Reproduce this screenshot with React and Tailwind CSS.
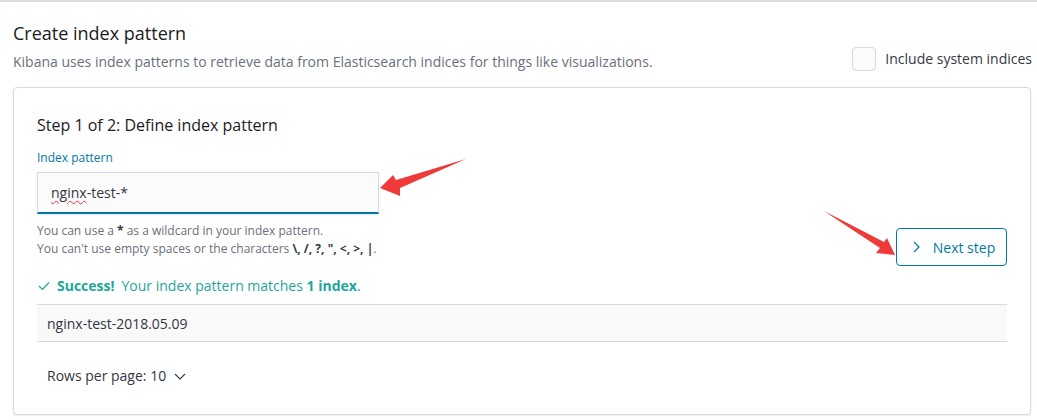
import React from 'react';

const font = { fontFamily: '"Open Sans", "Noto Sans", sans-serif' };

function Arrows() {
  // red annotation arrows drawn over the screenshot
  return (
    <svg className="absolute left-0 top-0 pointer-events-none" width="1037" height="420">
      <polygon
        fill="#f03a3a"
        points="380,186 393,173 396,178 466,157 400,186 400,194"
      />
      <polygon
        fill="#f03a3a"
        points="895,253 887,236 884,240 824,209 880,246 876,251"
      />
    </svg>
  );
}

export default function App() {
  return (
    <div className="relative w-[1037px] h-[420px] overflow-hidden bg-white border-t-2 border-[#dcdcdc]" style={font}>
      <div className="pl-[13px] pr-[5px] pt-[19px]">
        <h1 className="text-[18px] leading-6 text-[#1a1c21]">Create index pattern</h1>
        <div className="flex items-center justify-between mt-[7px]">
          <p className="text-[14px] leading-5 text-[#69707d]">
            Kibana uses index patterns to retrieve data from Elasticsearch indices for things like visualizations.
          </p>
          <label className="flex items-center gap-[9px] -mt-[7px]">
            <span className="w-[24px] h-[24px] rounded-[4px] border border-[#d9d9d9] bg-[#fbfbfb]" />
            <span className="text-[14px] text-[#343741]">Include system indices</span>
          </label>
        </div>
      </div>

      <div className="ml-[13px] mr-[6px] mt-[15px] border border-[#d9d9d9] rounded-[4px] bg-white shadow-[0_1px_2px_rgba(0,0,0,0.08)] px-[23px] pt-[25px] pb-[28px]">
        <div className="flex items-start justify-between">
          <div>
            <h2 className="text-[16px] leading-6 text-[#1a1c21]">Step 1 of 2: Define index pattern</h2>
            <div className="mt-[13px] text-[12px] leading-4 text-[#0079a5]">Index pattern</div>
            <div className="mt-[6px] w-[342px] h-[42px] bg-[#fbfbfb] border border-[#d3dae6] border-b-2 border-b-[#0079a5] shadow-[0_1px_2px_rgba(0,0,0,0.1)] flex items-center pl-[13px]">
              <span className="text-[14px] text-[#343741]">
                <span className="underline decoration-wavy decoration-[#e33] decoration-1 underline-offset-2">nginx</span>-test-*
              </span>
            </div>
            <div className="mt-[8px] text-[12px] leading-[18px] text-[#69707d]">
              <p>You can use a <b className="font-bold text-[#343741]">*</b> as a wildcard in your index pattern.</p>
              <p>
                You can't use empty spaces or the characters <b className="font-bold text-[#343741]">\, /, ?, ", &lt;, &gt;, |</b>.
              </p>
            </div>
          </div>
          <button className="mt-[115px] w-[111px] h-[38px] rounded-[4px] border border-[#0079a5] flex items-center justify-center gap-[12px] pl-[3px] text-[14px] text-[#0079a5]">
            <svg width="10" height="14" viewBox="0 0 10 14" fill="none" stroke="#0079a5" strokeWidth="1.2">
              <polyline points="3,2 8,7 3,12" />
            </svg>
            <span>Next step</span>
          </button>
        </div>

        <div className="mt-[10px] flex items-center text-[14px] leading-5 text-[#1ea69b]">
          <svg width="14" height="12" viewBox="0 0 14 12" fill="none" stroke="#1ea69b" strokeWidth="1.2" className="mr-[6px]">
            <polyline points="2,6 5.5,9.5 12,2.5" />
          </svg>
          <b className="font-bold">Success!</b>
          <span className="ml-[7px]">Your index pattern matches <b className="font-bold">1 index</b>.</span>
        </div>

        <div className="mt-[8px] h-[38px] border-y border-[#d9d9d9] bg-[#f9f9f9] flex items-center pl-[10px] text-[14px] text-[#343741]">
          nginx-test-2018.05.09
        </div>

        <div className="mt-[24px] flex items-center pl-[10px] text-[14px] leading-5 text-[#343741]">
          <span>Rows per page: 10</span>
          <svg width="14" height="10" viewBox="0 0 14 10" fill="none" stroke="#343741" strokeWidth="1.1" className="ml-[7px]">
            <polyline points="2,3 7,8 12,3" />
          </svg>
        </div>
      </div>

      <Arrows />
    </div>
  );
}
